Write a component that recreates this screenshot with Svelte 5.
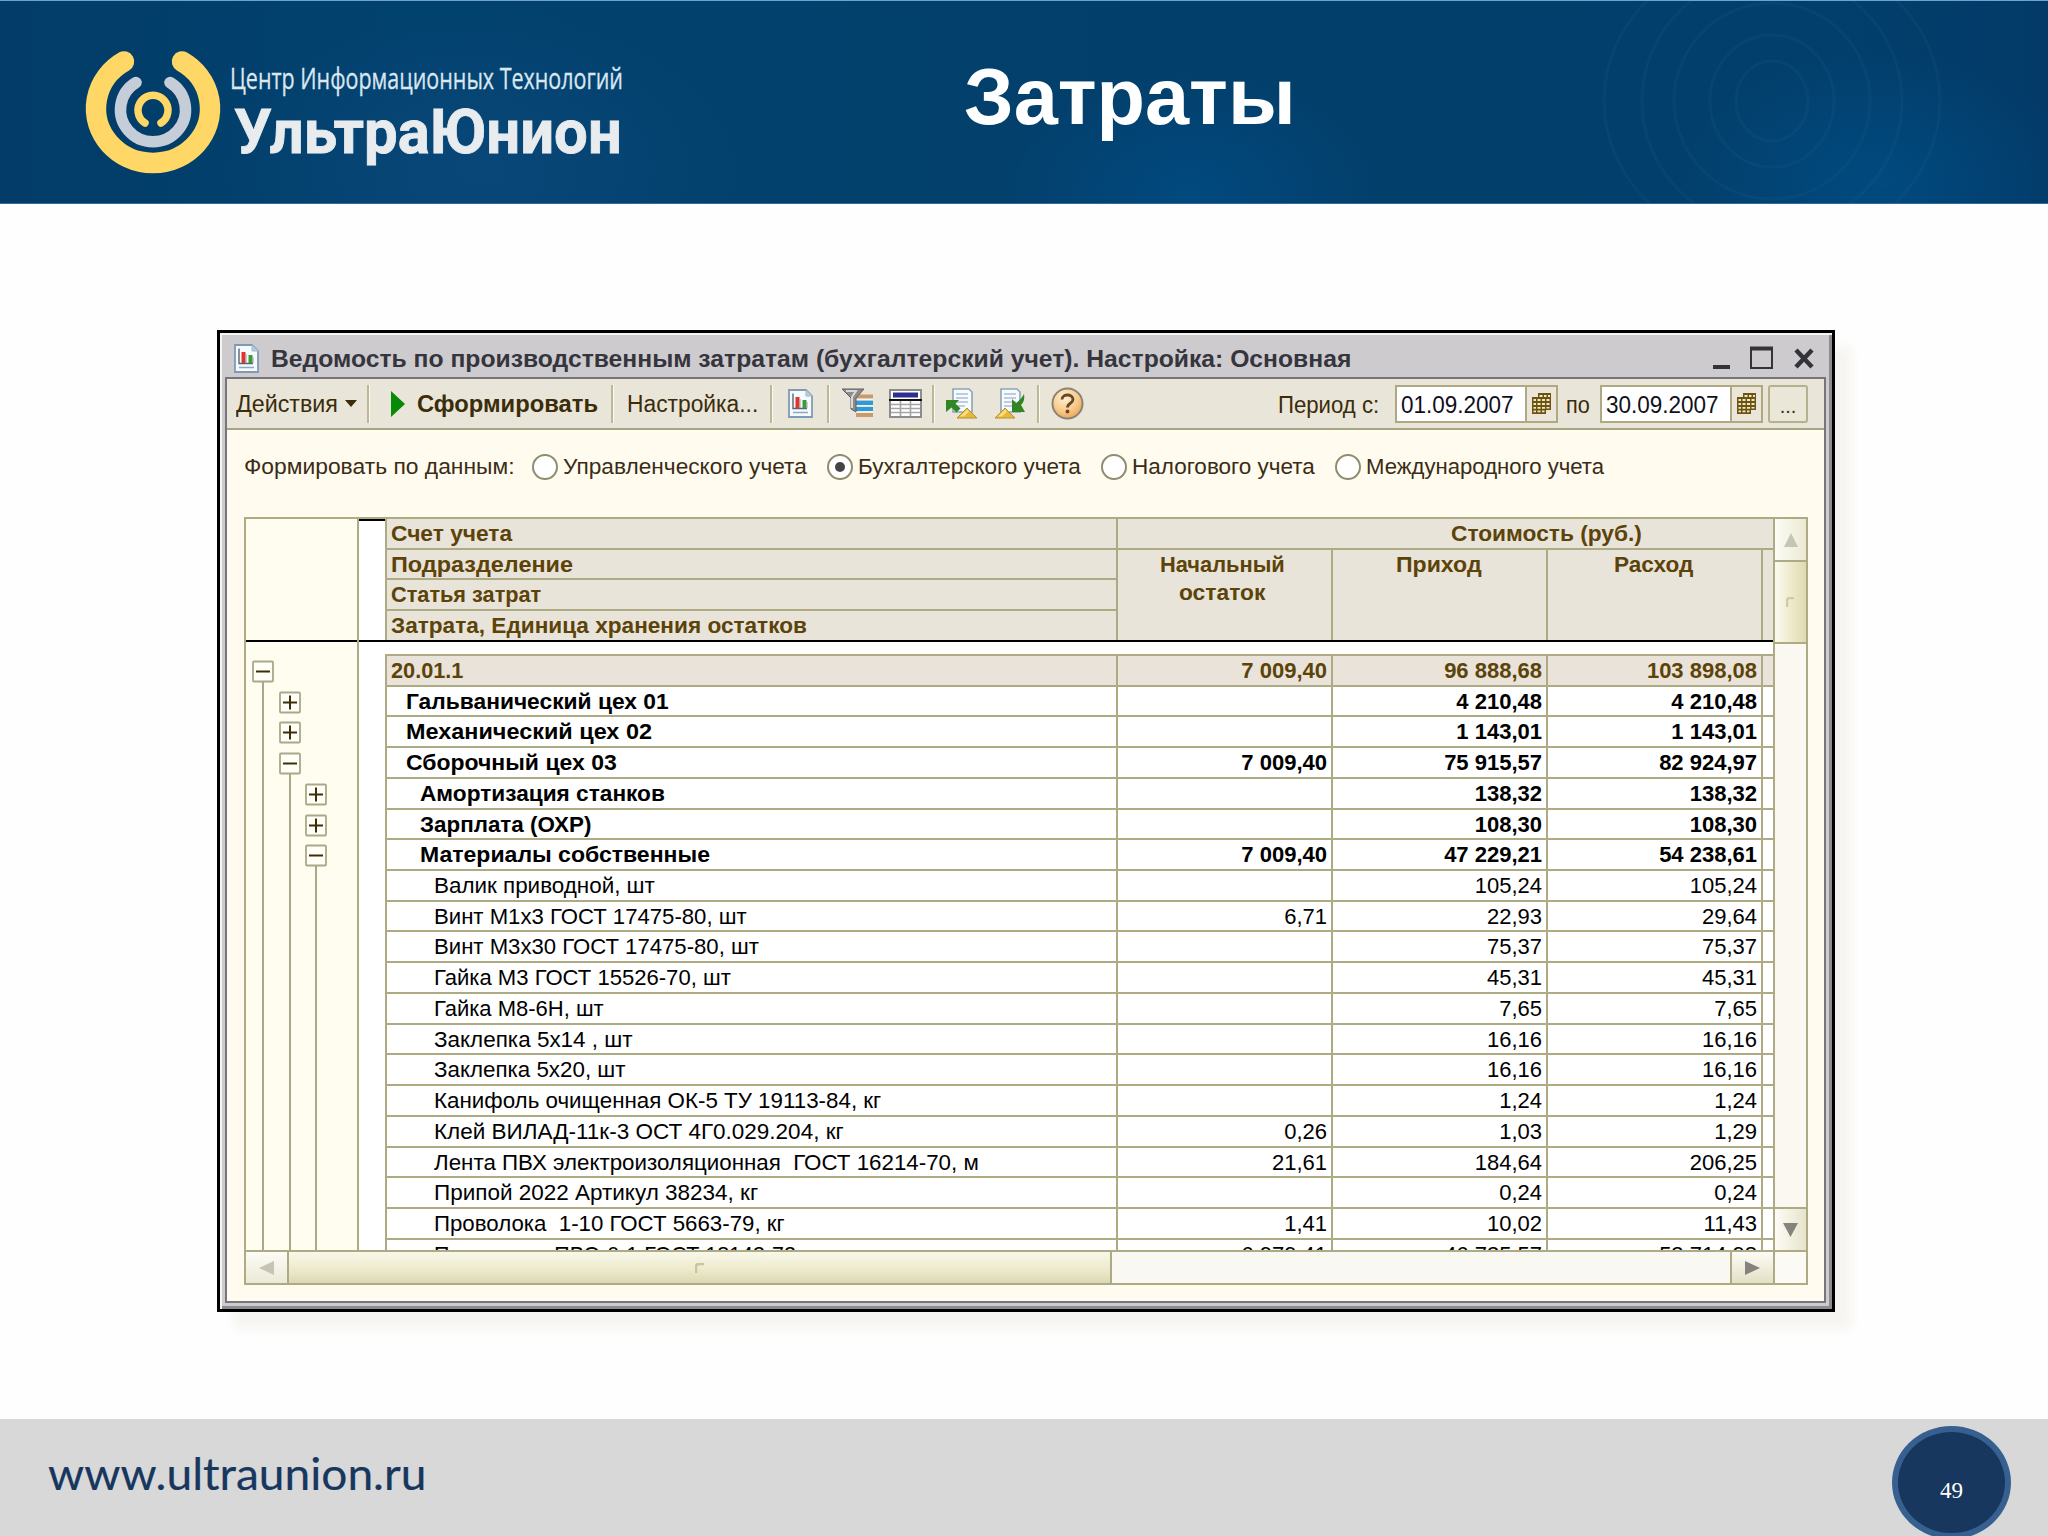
<script lang="ts">
  type Row = {
    tree: string;
    level: number;
    name: string;
    w: number;
    sums: [string, string, string];
  };

  const sources = [
    { name: "Управленческого учета", w: 244, on: false },
    { name: "Бухгалтерского учета", w: 223, on: true },
    { name: "Налогового учета", w: 183, on: false },
    { name: "Международного учета", w: 238, on: false },
  ];

  const groups = [
    { name: "Счет учета", w: 121 },
    { name: "Подразделение", w: 182 },
    { name: "Статья затрат", w: 150 },
    { name: "Затрата, Единица хранения остатков", w: 416 },
  ];

  // tree: one char per outline level, "|" is a line, "+" and "-" are toggles
  const rows: Row[] = [
    { tree: "-", level: 0, name: "20.01.1", w: 72, sums: ["7 009,40", "96 888,68", "103 898,08"] },
    { tree: "|+", level: 1, name: "Гальванический цех 01", w: 263, sums: ["", "4 210,48", "4 210,48"] },
    { tree: "|+", level: 1, name: "Механический цех 02", w: 246, sums: ["", "1 143,01", "1 143,01"] },
    { tree: "|-", level: 1, name: "Сборочный цех 03", w: 211, sums: ["7 009,40", "75 915,57", "82 924,97"] },
    { tree: "||+", level: 2, name: "Амортизация станков", w: 245, sums: ["", "138,32", "138,32"] },
    { tree: "||+", level: 2, name: "Зарплата (ОХР)", w: 171, sums: ["", "108,30", "108,30"] },
    { tree: "||-", level: 2, name: "Материалы собственные", w: 290, sums: ["7 009,40", "47 229,21", "54 238,61"] },
    { tree: "|||", level: 3, name: "Валик приводной, шт", w: 221, sums: ["", "105,24", "105,24"] },
    { tree: "|||", level: 3, name: "Винт М1х3 ГОСТ 17475-80, шт", w: 313, sums: ["6,71", "22,93", "29,64"] },
    { tree: "|||", level: 3, name: "Винт М3х30 ГОСТ 17475-80, шт", w: 325, sums: ["", "75,37", "75,37"] },
    { tree: "|||", level: 3, name: "Гайка М3 ГОСТ 15526-70, шт", w: 297, sums: ["", "45,31", "45,31"] },
    { tree: "|||", level: 3, name: "Гайка М8-6Н, шт", w: 170, sums: ["", "7,65", "7,65"] },
    { tree: "|||", level: 3, name: "Заклепка 5х14 , шт", w: 199, sums: ["", "16,16", "16,16"] },
    { tree: "|||", level: 3, name: "Заклепка 5х20, шт", w: 192, sums: ["", "16,16", "16,16"] },
    { tree: "|||", level: 3, name: "Канифоль очищенная ОК-5 ТУ 19113-84, кг", w: 447, sums: ["", "1,24", "1,24"] },
    { tree: "|||", level: 3, name: "Клей ВИЛАД-11к-3 ОСТ 4Г0.029.204, кг", w: 410, sums: ["0,26", "1,03", "1,29"] },
    { tree: "|||", level: 3, name: "Лента ПВХ электроизоляционная  ГОСТ 16214-70, м", w: 545, sums: ["21,61", "184,64", "206,25"] },
    { tree: "|||", level: 3, name: "Припой 2022 Артикул 38234, кг", w: 324, sums: ["", "0,24", "0,24"] },
    { tree: "|||", level: 3, name: "Проволока  1-10 ГОСТ 5663-79, кг", w: 351, sums: ["1,41", "10,02", "11,43"] },
    { tree: "|||", level: 3, name: "Проволока  ПВО-0-1 ГОСТ 18143-72", w: 362, sums: ["6 979,41", "46 735,57", "53 714,98"] },
  ];

  // squeeze a line of text into the width of its box
  function squeeze(node: HTMLElement, w: number) {
    node.style.transform = `scaleX(${w / node.offsetWidth})`;
  }
</script>

{#snippet line(text: string, w: number)}
  <span class="line" style:width="{w}px"><span class="ink" use:squeeze={w}>{text}</span></span>
{/snippet}

{#snippet report()}
  <svg class="report" width="25" height="29" viewBox="0 0 25 29">
    <path d="M1 1h17l6 6v21H1z" fill="#f7fafd" stroke="#7f9ab5" stroke-width="1.8" />
    <path d="M18 1v6h6z" fill="#b5cbe0" stroke="#a3bacf" />
    <path d="M5 4.5v15h14" fill="none" stroke="#5b6470" stroke-width="1.4" />
    <path d="M9.5 8v11" stroke="#e0352f" stroke-width="4" />
    <path d="M16.5 11v8" stroke="#3c9a3a" stroke-width="4" />
    <path d="M12 10v9M19 13v6" stroke="#9aa0a4" />
    <path d="M5 23.5h15" stroke="#86a9cc" stroke-width="1.5" />
  </svg>
{/snippet}

{#snippet sheetArrow(dir: string)}
  <svg width="32" height="32" viewBox="0 0 32 32">
    <path d="M7 1h16l3 3v20H7z" fill="#f8fbfe" stroke="#8ba3bb" stroke-width="1.6" />
    <path d="M10 6h12M10 10h12M10 14h12M10 18h9" stroke="#a9bdd4" stroke-width="1.5" />
    {#if dir === "in"}
      <path d="M0 12h13l-3.500 3.500 5 5-4 4-5-5L0 24z" fill="#2f8622" />
      <path d="M11 30l10-10 10 10z" fill="#e6b93a" stroke="#b8902c" />
      <path d="M14 28.500l7-7 2 2-5 5z" fill="#f7dd83" />
    {:else}
      <path d="M30 6c1 6-1 9-3 11l4 7H18V11l4 4c3-2 6-5 8-9z" fill="#2f8622" />
      <path d="M1 30l10-10 10 10z" fill="#e6b93a" stroke="#b8902c" />
      <path d="M4 28.500l7-7 2 2-5 5z" fill="#f7dd83" />
    {/if}
  </svg>
{/snippet}

{#snippet dateField(value: string)}
  <div class="date">
    <div class="value">{@render line(value, 113)}</div>
    <div class="pick">
      <svg width="21" height="23" viewBox="0 0 21 23">
        <path d="M7 1h13v17h-5v4H1V5h6z" fill="#6b5412" />
        <path
          d="M8.500 3h3v2h-3zM13 3h2.500v2H13zM17 3h2v2h-2zM2.500 7h2.500v2H2.500zM6.500 7h3v2h-3zM11 7h3v2h-3zM15.500 7h3v2h-3zM2.500 11h2.500v2H2.500zM6.500 11h3v2h-3zM11 11h3v2h-3zM15.500 11h3v2h-3zM2.500 15h2.500v1.700H2.500zM6.500 15h3v1.700h-3zM11 15h3v1.700h-3zM15.500 15h3v1.500h-3zM2.500 18.600h2.500v1.700H2.500zM6.500 18.600h3v1.700h-3zM11 18.600h2.500v1.700H11z"
          fill="#efe6c4"
        />
      </svg>
    </div>
  </div>
{/snippet}

<div class="slide">
  <header>
    <svg class="waves" width="2048" height="202" viewBox="0 0 2048 202">
      <g fill="none" stroke="#2a6a96" stroke-width="3" opacity=".13">
        <ellipse cx="1772" cy="100" rx="36" ry="40" />
        <ellipse cx="1772" cy="100" rx="62" ry="66" />
        <ellipse cx="1772" cy="100" rx="98" ry="98" />
        <ellipse cx="1772" cy="100" rx="130" ry="128" />
        <ellipse cx="1772" cy="100" rx="168" ry="150" />
      </g>
    </svg>
    <svg class="logo" width="140" height="130" viewBox="82 46 140 130">
      <g fill="none" stroke-linecap="round">
        <path d="M124 61.500A57 54.500 0 1 0 182 61.500" stroke="#fed766" stroke-width="20.500" />
        <path d="M136 82.500A32.500 32 0 1 0 170 82.500" stroke="#c5cdd9" stroke-width="11.500" />
        <path d="M145 123A15 15 0 1 1 161 123" stroke="#fed766" stroke-width="7.500" />
      </g>
    </svg>
    <div class="brand">
      <div class="tagline">{@render line("Центр Информационных Технологий", 393)}</div>
      <div class="company">{@render line("УльтраЮнион", 388)}</div>
    </div>
    <h1>{@render line("Затраты", 332)}</h1>
  </header>

  <main>
    <div class="window">
      <div class="titlebar">
        {@render report()}
        <div class="caption">
          {@render line("Ведомость по производственным затратам (бухгалтерский учет). Настройка: Основная", 1080)}
        </div>
        <svg class="controls" width="101" height="24" viewBox="0 0 101 24">
          <path d="M0 21h17" stroke="#333338" stroke-width="4" />
          <path d="M38 2v20h21V2" fill="none" stroke="#333338" stroke-width="2" />
          <path d="M37 2.500h23" stroke="#333338" stroke-width="4" />
          <path d="M83 4l16 17M99 4L83 21" stroke="#333338" stroke-width="4.500" />
        </svg>
      </div>

      <div class="client">
        <div class="toolbar">
          <span class="actions">{@render line("Действия", 102)}</span>
          <svg class="drop" width="12" height="7"><path d="M0 0h12L6 7z" fill="#3b2c0a" /></svg>
          <i class="sep s1"></i>
          <svg class="run" width="14" height="26"><path d="M0 0l14 13L0 26z" fill="#088a08" /></svg>
          <b>{@render line("Сформировать", 181)}</b>
          <i class="sep s2"></i>
          <span class="setup">{@render line("Настройка...", 131)}</span>
          <i class="sep s3"></i>
          <span class="i1">{@render report()}</span>
          <i class="sep s4"></i>
          <svg class="i2" width="31" height="32" viewBox="0 0 31 32">
            <path d="M14 8.500h17M14 27h17" stroke="#c99a6c" stroke-width="4" />
            <path d="M14 14.700h17M14 20.900h17" stroke="#2e9bd8" stroke-width="4.400" />
            <path d="M14 11.600h17M14 17.800h17M14 24h17" stroke="#f5f3ea" stroke-width="1.500" />
            <path d="M0 1h22l-8 9v14l-5-3V10z" fill="#8c8c8c" stroke="#5f5f5f" />
            <path d="M4 3h10l-4 6v11" fill="none" stroke="#d9d9d9" stroke-width="2" />
          </svg>
          <svg class="i3" width="33" height="29" viewBox="0 0 33 29">
            <path d="M1 1h31v27H1z" fill="#fff" stroke="#8c8c90" stroke-width="2" />
            <path d="M4 6h25" stroke="#2a2f92" stroke-width="5" />
            <path d="M0 11h33" stroke="#111" stroke-width="2.200" />
            <path d="M2 15.500h29M2 19.500h29M2 23.500h29M11.500 12v15M21.500 12v15" stroke="#a5a5a5" stroke-width="1.600" />
          </svg>
          <i class="sep s5"></i>
          <span class="i4">{@render sheetArrow("in")}</span>
          <span class="i5">{@render sheetArrow("out")}</span>
          <i class="sep s6"></i>
          <svg class="help" width="33" height="33" viewBox="0 0 33 33">
            <defs>
              <radialGradient id="amber" cx=".4" cy=".3" r=".75">
                <stop offset="0" stop-color="#fff1d6" />
                <stop offset=".6" stop-color="#f8c98a" />
                <stop offset="1" stop-color="#eba550" />
              </radialGradient>
            </defs>
            <circle cx="16.500" cy="16.500" r="15" fill="url(#amber)" stroke="#8b8378" stroke-width="2" />
            <path d="M11 12.500c0-6 11-6 11 0 0 4-5.500 3.500-5.500 8" fill="none" stroke="#6a4a22" stroke-width="2.800" />
            <circle cx="16.500" cy="24.500" r="1.900" fill="#6a4a22" />
          </svg>
          <span class="period">{@render line("Период с:", 101)}</span>
          {@render dateField("01.09.2007")}
          <span class="to">{@render line("по", 24)}</span>
          {@render dateField("30.09.2007")}
          <div class="more">...</div>
        </div>

        <div class="sources">
          <span class="by">{@render line("Формировать по данным:", 271)}</span>
          {#each sources as s}
            <label>
              <span class="radio" class:on={s.on}></span>
              {@render line(s.name, s.w)}
            </label>
          {/each}
        </div>

        <div class="grid">
          <div class="gutter">
            <div class="corner"></div>
            <div class="tree">
              {#each rows as row}
                <div class="branch">
                  {#each row.tree as mark}
                    <svg width="26.7" height="30.72" viewBox="0 0 26.7 30.72">
                      {#if mark === "|"}
                        <path d="M11 0v31" stroke="#a9a888" stroke-width="2" />
                      {:else}
                        {#if mark === "-"}
                          <path d="M11 27v4" stroke="#a9a888" stroke-width="2" />
                        {/if}
                        <rect x="1" y="6.500" width="20" height="20" rx="1" fill="#fffff8" stroke="#a9a888" stroke-width="1.800" />
                        <path d="M4 16.500h14" stroke="#3b2c0a" stroke-width="2" />
                        {#if mark === "+"}
                          <path d="M11 9.500v14" stroke="#3b2c0a" stroke-width="2" />
                        {/if}
                      {/if}
                    </svg>
                  {/each}
                </div>
              {/each}
            </div>
          </div>

          <div class="sheet">
            <div class="head">
              <div class="notch"></div>
              <div class="groups">
                {#each groups as g}
                  <div>{@render line(g.name, g.w)}</div>
                {/each}
              </div>
              <div class="costs">
                <div class="cost">{@render line("Стоимость (руб.)", 191)}</div>
                <div class="cols">
                  <div>{@render line("Начальный", 125)}{@render line("остаток", 86)}</div>
                  <div>{@render line("Приход", 86)}</div>
                  <div>{@render line("Расход", 79)}</div>
                  <div></div>
                </div>
              </div>
            </div>
            <div class="body">
              {#each rows as row}
                <div class="row l{row.level}">
                  <div class="name">{@render line(row.name, row.w)}</div>
                  {#each row.sums as sum}
                    <div class="sum">{sum}</div>
                  {/each}
                  <div></div>
                </div>
              {/each}
            </div>
          </div>

          <div class="vscroll">
            <div class="up">
              <svg width="14" height="14"><path d="M7 0l7 14H0z" fill="#c6c5b4" /></svg>
            </div>
            <div class="vthumb">
              <svg width="9" height="10"><path d="M1 10V4q0-3 3-3h4" fill="none" stroke="#cfcba5" stroke-width="2.500" /></svg>
            </div>
            <div class="down">
              <svg width="15" height="14"><path d="M0 0h15L7.500 14z" fill="#85837c" /></svg>
            </div>
          </div>

          <div class="hscroll">
            <div class="left">
              <svg width="15" height="14"><path d="M0 7L15 0v14z" fill="#c6c5b4" /></svg>
            </div>
            <div class="hthumb">
              <svg width="10" height="10"><path d="M1 10V4q0-3 3-3h5" fill="none" stroke="#c9c59c" stroke-width="2.500" /></svg>
            </div>
            <div class="right">
              <svg width="15" height="14"><path d="M0 0l15 7L0 14z" fill="#85837c" /></svg>
            </div>
          </div>
          <div class="size"></div>
        </div>
      </div>
    </div>
  </main>

  <footer>
    <span class="site">{@render line("www.ultraunion.ru", 378)}</span>
    <span class="page">49</span>
  </footer>
</div>

<style>
  :global(body) {
    margin: 0;
    background: #fefefe;
  }
  .slide {
    width: 2048px;
    height: 1536px;
    display: flex;
    flex-direction: column;
    overflow: hidden;
    font-family: "Liberation Sans", Arial, sans-serif;
  }
  .slide * {
    box-sizing: border-box;
  }
  svg {
    display: block;
    flex: none;
  }
  .line {
    display: inline-block;
    white-space: pre;
    flex: none;
    vertical-align: top;
  }
  .ink {
    display: inline-block;
    transform-origin: 0 50%;
  }

  header {
    position: relative;
    flex: none;
    height: 204px;
    display: flex;
    align-items: flex-start;
    border-top: 1px solid #6fa3cd;
    border-bottom: 1px solid #2f6c9c;
    background:
      radial-gradient(ellipse 190px 120px at 1190px 190px, rgba(0, 80, 140, 0.6), transparent),
      radial-gradient(ellipse 200px 130px at 1880px 180px, rgba(0, 82, 140, 0.6), transparent),
      radial-gradient(ellipse 260px 160px at 480px 170px, rgba(16, 76, 130, 0.5), transparent),
      linear-gradient(90deg, #033c68, #02426f 20%, #033f6b 60%, #023f6c 90%, #033a68);
  }
  .waves {
    position: absolute;
    left: 0;
    top: 0;
  }
  .logo {
    margin: 45px 0 0 82px;
  }
  .brand {
    width: 392px;
    margin: 57px 0 0 8px;
  }
  .tagline {
    color: #dbe6ef;
    font-family: "Open Sans", sans-serif;
    font-size: 29px;
    line-height: 39px;
    -webkit-text-stroke: 0.3px #dbe6ef;
  }
  .company {
    padding-left: 4px;
    margin-top: -2px;
    color: #e9ecef;
    font-family: Roboto, sans-serif;
    font-size: 62px;
    font-weight: 700;
    line-height: 73px;
    -webkit-text-stroke: 0.8px #e9ecef;
  }
  h1 {
    margin: 48px 0 0 342px;
    color: #fff;
    font-size: 80px;
    line-height: 96px;
  }

  main {
    flex: none;
    height: 1215px;
    padding: 126px 0 0 217px;
  }
  .window {
    width: 1618px;
    height: 982px;
    padding: 2px 6px 6px 3px;
    display: flex;
    flex-direction: column;
    border: 3px solid #000;
    background: #cdcbce;
    box-shadow:
      inset 2px 2px 0 #f4f4f5,
      inset -3px -3px 0 #8d8b8e,
      17px 17px 10px #f6f5f1;
  }
  .titlebar {
    height: 42px;
    padding: 4px 12px 0 11px;
    display: flex;
    align-items: center;
    color: #35353d;
  }
  .caption {
    margin: 0 auto 0 12px;
    font-size: 23px;
    font-weight: 700;
    line-height: 28px;
    padding-top: 2px;
  }
  .client {
    flex: 1;
    margin-left: 2px;
    border: 2px solid #77757c;
    background: #fffbee;
    display: flex;
    flex-direction: column;
  }
  .toolbar {
    height: 51px;
    flex: none;
    padding-left: 9px;
    display: flex;
    align-items: center;
    border-bottom: 2px solid #a8a583;
    background: #e9e5d9;
    color: #3b2c0a;
    font-size: 23.5px;
    line-height: 28px;
  }
  .sep {
    width: 3px;
    height: 38px;
    border-left: 2px solid #bbb797;
    border-right: 1px solid #fbf9f0;
  }
  .drop {
    margin-left: 7px;
  }
  .s1 {
    margin: 0 21px 0 10px;
  }
  .run {
    margin-right: 12px;
  }
  .s2 {
    margin: 0 13px 0 13px;
  }
  .s3 {
    margin: 0 15px 0 12px;
  }
  .s4 {
    margin: 0 12px 0 14px;
  }
  .i3 {
    margin-left: 16px;
  }
  .s5 {
    margin: 0 11px 0 10px;
  }
  .i5 {
    margin-left: 16px;
  }
  .s6 {
    margin: 0 11px 0 11px;
  }
  .period {
    margin: 2px 16px 0 auto;
  }
  .date {
    width: 163px;
    height: 38px;
    display: flex;
    border: 2px solid #aea983;
    background: #fff;
  }
  .value {
    flex: 1;
    padding: 4px 0 0 4px;
    color: #10101c;
  }
  .pick {
    width: 31px;
    display: grid;
    place-items: center;
    border-left: 2px solid #aea983;
    background: #ece6da;
  }
  .to {
    margin: 2px 10px 0 8px;
  }
  .more {
    width: 40px;
    height: 38px;
    margin: 0 16px 0 5px;
    border: 2px solid #b5b18d;
    border-radius: 3px;
    background: #ebe7d8;
    text-align: center;
    line-height: 38px;
    font-size: 20px;
  }

  .sources {
    height: 76px;
    flex: none;
    padding: 0 0 2px 17px;
    display: flex;
    align-items: center;
    color: #3a2c16;
    font-size: 22.5px;
    line-height: 28px;
  }
  .by {
    margin-right: -3px;
  }
  label {
    display: flex;
    align-items: center;
    gap: 5px;
    margin-left: 20px;
  }
  .radio {
    width: 26px;
    height: 26px;
    border: 2px solid #8f8d6f;
    border-radius: 50%;
    background: #fff;
    display: grid;
    place-items: center;
  }
  .radio.on::after {
    content: "";
    width: 10px;
    height: 10px;
    border-radius: 50%;
    background: #444;
  }

  .grid {
    width: 1564px;
    height: 768px;
    margin: 11px 0 0 17px;
    display: grid;
    grid-template: 731px 33px / 113px 1414px 33px;
    border: 2px solid #aeaa84;
    font-size: 22px;
  }
  .gutter {
    border-right: 2px solid #aeaa84;
    overflow: hidden;
    background: #fffdf0;
  }
  .corner {
    height: 123px;
    border-bottom: 2px solid #000;
  }
  .tree {
    padding: 13px 0 0 6px;
  }
  .branch {
    display: flex;
    height: 30.72px;
  }
  .sheet {
    background: #fff;
    overflow: hidden;
  }
  .head {
    height: 123px;
    display: flex;
    border-bottom: 2px solid #000;
    color: #5c4309;
    font-weight: 700;
  }
  .notch {
    width: 26px;
    border-top: 2px solid #000;
  }
  .groups {
    width: 731px;
    border-left: 2px solid #aeaa84;
    background: #e9e4da;
  }
  .groups div {
    height: 30.72px;
    padding: 1px 0 0 4px;
    line-height: 28px;
    border-bottom: 2px solid #aeaa84;
  }
  .groups div:last-child {
    border: 0;
  }
  .costs {
    flex: 1;
    border-left: 2px solid #aeaa84;
    background: #e9e4da;
  }
  .cost {
    height: 31px;
    padding: 1px 0 0 333px;
    line-height: 28px;
    border-bottom: 2px solid #aeaa84;
  }
  .cols {
    height: 90px;
    display: grid;
    grid-template-columns: 213px 215px 215px 1fr;
  }
  .cols div {
    padding: 1px 2px 0 0;
    display: flex;
    flex-direction: column;
    align-items: center;
    line-height: 28px;
  }
  .cols div:first-child {
    padding-right: 5px;
  }
  .cols div + div {
    border-left: 2px solid #aeaa84;
  }
  .body {
    padding-top: 12px;
  }
  .row {
    height: 30.72px;
    margin-left: 26px;
    display: grid;
    grid-template-columns: 731px 215px 215px 215px 1fr;
    border-top: 2px solid #aeaa84;
    color: #000;
    line-height: 30px;
    font-weight: 700;
  }
  .row div {
    height: 29px;
    border-left: 2px solid #aeaa84;
  }
  .row .sum {
    text-align: right;
    padding-right: 4px;
  }
  .row .name {
    padding-left: 4px;
  }
  .l0 {
    background: #e9e3da;
    color: #5c4309;
  }
  .l3 {
    font-weight: 400;
  }
  .row.l1 .name {
    padding-left: 19px;
  }
  .row.l2 .name {
    padding-left: 33px;
  }
  .row.l3 .name {
    padding-left: 47px;
  }

  .vscroll {
    border-left: 2px solid #aeaa84;
    background: #faf8f1;
    display: flex;
    flex-direction: column;
  }
  .vscroll div,
  .hscroll div {
    display: grid;
    place-items: center;
  }
  .up {
    height: 43px;
    border-bottom: 2px solid #aeaa84;
    background: linear-gradient(90deg, #fdfcf6, #ebe9d3);
  }
  .vthumb {
    height: 82px;
    border-bottom: 2px solid #aeaa84;
    background: linear-gradient(90deg, #fbfaf0, #ebe8c6 60%, #dedab4);
  }
  .down {
    height: 43px;
    margin-top: auto;
    border-top: 2px solid #aeaa84;
    background: linear-gradient(90deg, #fdfcf6, #e6e4cb);
  }
  .hscroll {
    grid-column: 1 / 3;
    border-top: 2px solid #aeaa84;
    background: #faf8f3;
    display: flex;
  }
  .left {
    width: 43px;
    border-right: 2px solid #aeaa84;
    background: linear-gradient(#fdfcf6, #ebe9d6);
  }
  .hthumb {
    width: 823px;
    border-right: 2px solid #aeaa84;
    background: linear-gradient(#f9f8ea, #ece9ca 60%, #dcd8b4);
  }
  .right {
    width: 43px;
    margin-left: auto;
    border-left: 2px solid #aeaa84;
    background: linear-gradient(#fdfcf6, #e3e0c5);
  }
  .size {
    border-left: 2px solid #aeaa84;
    border-top: 2px solid #aeaa84;
    background: #fcfaf4;
  }

  footer {
    flex: none;
    height: 117px;
    padding: 0 37px 0 48px;
    display: flex;
    justify-content: space-between;
    align-items: flex-start;
    background: #d9d8d9;
  }
  .site {
    margin-top: 26px;
    color: #17375e;
    font-family: Lato, sans-serif;
    font-size: 44px;
    line-height: 56px;
    -webkit-text-stroke: 0.2px #17375e;
  }
  .page {
    width: 119px;
    height: 113px;
    margin-top: 7px;
    padding-top: 46px;
    border: 6px solid #35608f;
    border-radius: 50%;
    background: #17375e;
    color: #fff;
    font: 23px/26px "Liberation Serif", serif;
    text-align: center;
  }
</style>
